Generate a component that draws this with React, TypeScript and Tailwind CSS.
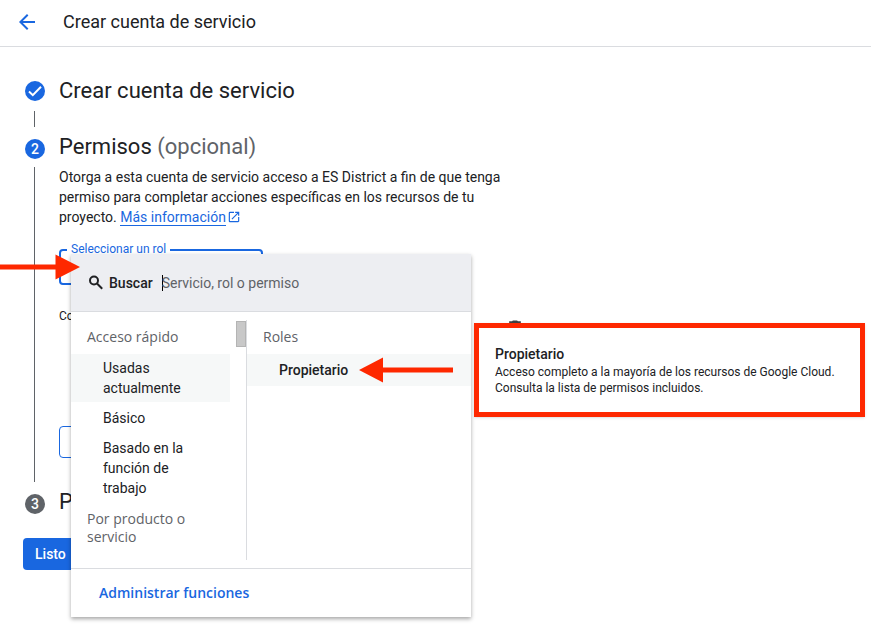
import { useState } from 'react'
import type { ReactNode } from 'react'
import { MdArrowBack, MdDelete, MdOpenInNew } from 'react-icons/md'

const quickAccess = ['Usadas actualmente', 'Básico', 'Basado en la función de trabajo']

type StepProps = {
  badge: ReactNode
  badgeClass?: string
  lineClass?: string
  className?: string
  children: ReactNode
}

function Step({ badge, badgeClass = 'bg-[#1967e0]', lineClass, className = '', children }: StepProps) {
  return (
    <li className={`flex gap-[14px] ${className}`}>
      <div className="flex w-5 shrink-0 flex-col items-center pt-2 pb-1">
        <span
          className={`flex size-5 shrink-0 items-center justify-center rounded-full text-sm font-medium text-white ${badgeClass}`}
        >
          {badge}
        </span>
        {lineClass && <span className={`mr-px w-px flex-1 bg-[#5f6368] ${lineClass}`} />}
      </div>
      <div className="min-w-0 flex-1">{children}</div>
    </li>
  )
}

function StepTitle({ children, className = 'pt-[2px]' }: { children: ReactNode; className?: string }) {
  return <h2 className={`text-[22px] leading-7 ${className}`}>{children}</h2>
}

function CheckIcon() {
  return (
    <svg width="20" height="20" viewBox="0 0 20 20" fill="none" stroke="currentColor" strokeWidth="2" aria-hidden="true">
      <path d="M4 10.600 7.800 14.200 16 5.800" />
    </svg>
  )
}

function SearchIcon() {
  return (
    <svg
      className="mr-1 size-[18px]"
      viewBox="0 0 18 18"
      fill="none"
      stroke="currentColor"
      strokeWidth="2"
      aria-hidden="true"
    >
      <circle cx="7" cy="6.500" r="4" />
      <path d="m10 9.500 5.200 5.200" />
    </svg>
  )
}

function RoleDetail() {
  return (
    <aside className="absolute top-[69px] left-[403px] w-[391px] border-[5px] border-[#fe2800] bg-white p-4 shadow-sm">
      <h3 className="text-sm leading-5 font-medium">Propietario</h3>
      <p className="text-xs leading-4">
        Acceso completo a la mayoría de los recursos de Google Cloud. Consulta la lista de permisos incluidos.
      </p>
    </aside>
  )
}

function RoleMenu() {
  const [active, setActive] = useState(quickAccess[0])
  const [query, setQuery] = useState('')

  return (
    <div className="absolute top-[5px] left-3 z-10 w-[400px] bg-white shadow-[0_2px_4px_rgba(0,0,0,0.35)]">
      <div className="flex h-[58px] items-center border-b border-[#dadce0] bg-[#edeef2] px-4">
        <SearchIcon />
        <label htmlFor="role-search" className="text-sm font-medium">
          Buscar
        </label>
        <span className="ml-[9px] h-4 w-px bg-black" />
        <input
          id="role-search"
          value={query}
          onChange={(e) => setQuery(e.target.value)}
          placeholder="Servicio, rol o permiso"
          className="-ml-px min-w-0 flex-1 bg-transparent text-sm outline-none placeholder:text-[#5f6368]"
        />
      </div>

      <div className="flex border-b border-[#dadce0] py-2">
        <div className="flex w-44 border-r border-[#dadce0]">
          <div className="w-[159px] text-sm">
            <p className="px-4 py-2 font-['Open_Sans',sans-serif] leading-[18px] text-[#5f6368]">Acceso rápido</p>
            <ul className="flex flex-col gap-[2px]">
              {quickAccess.map((item) => (
                <li key={item}>
                  <button
                    type="button"
                    onClick={() => setActive(item)}
                    className={`block w-full py-1 pr-8 pl-8 text-left leading-5 ${
                      item === active ? 'bg-[#f6f8f8]' : ''
                    }`}
                  >
                    {item}
                  </button>
                </li>
              ))}
            </ul>
            <p className="px-4 pt-2 pb-[14px] font-['Open_Sans',sans-serif] leading-[18px] text-[#5f6368]">
              Por producto o servicio
            </p>
          </div>
          <span className="mt-px ml-auto h-[26px] w-[10px] border border-[#b4b4b4] bg-[#c8c8c8]" />
        </div>
        <div className="flex-1 text-sm">
          <p className="px-4 py-2 font-['Open_Sans',sans-serif] leading-[18px] text-[#5f6368]">Roles</p>
          <button type="button" className="block h-8 w-full bg-[#f6f8f8] pl-8 text-left font-medium">
            Propietario
          </button>
        </div>
      </div>

      <div className="flex h-12 items-center px-7">
        <a href="#roles" className="font-['Open_Sans',sans-serif] text-sm font-semibold text-[#1967e0]">
          Administrar funciones
        </a>
      </div>

      <svg
        className="absolute top-[103px] left-[288px]"
        width="95"
        height="26"
        viewBox="0 0 95 26"
        fill="#fe2800"
        aria-hidden="true"
      >
        <path d="M0 13 24 .5V10.500H94V15.500H24V25.500Z" />
      </svg>
      <RoleDetail />
    </div>
  )
}

function RoleField() {
  return (
    <div className="relative mt-[22px] w-[204px]">
      <label htmlFor="role" className="absolute -top-2 left-2 bg-white px-1 text-xs leading-4 text-[#1967e0]">
        Seleccionar un rol
      </label>
      <select id="role" className="block h-9 w-full appearance-none rounded border-2 border-[#1967e0] bg-white px-3" />
      <RoleMenu />
    </div>
  )
}

export default function App() {
  return (
    <div className="relative min-h-screen overflow-hidden bg-white font-['Roboto',sans-serif] text-[#202124]">
      <header className="flex items-center gap-6 border-b border-[#dadce0] px-[15px] pt-[10px] pb-3">
        <button type="button" aria-label="Volver" className="text-[#1967e0]">
          <MdArrowBack className="size-6" />
        </button>
        <h1 className="text-lg leading-6">Crear cuenta de servicio</h1>
      </header>

      <main className="pt-[26px] pr-6 pb-12 pl-[25px]">
        <ol>
          <Step badge={<CheckIcon />} lineClass="mt-[10px]" className="h-[58px]">
            <StepTitle className="pt-1">Crear cuenta de servicio</StepTitle>
          </Step>

          <Step badge="2" lineClass="mt-2">
            <StepTitle>
              Permisos <span className="text-[#5f6368]">(opcional)</span>
            </StepTitle>
            <p className="mt-[6px] max-w-[450px] text-sm leading-5">
              Otorga a esta cuenta de servicio acceso a ES District a fin de que tenga permiso para completar acciones
              específicas en los recursos de tu proyecto.{' '}
              <a href="#info" className="whitespace-nowrap text-[#1967e0]">
                <span className="border-b border-[#1967e0]">Más información</span>
                <MdOpenInNew className="ml-px inline size-[14px] align-[-2px]" aria-hidden="true" />
              </a>
            </p>
            <RoleField />
            <div className="mt-[22px] flex max-w-[466px] items-start justify-between">
              <p className="text-xs leading-[18px]">Condición</p>
              <button type="button" aria-label="Borrar rol" className="mt-[11px] text-[#3c4043]">
                <MdDelete className="size-5" />
              </button>
            </div>
            <button
              type="button"
              aria-label="Agregar otro rol"
              className="mt-[88px] mb-[28px] block h-8 w-40 rounded border border-[#1967e0]"
            />
          </Step>

          <Step badge="3" badgeClass="bg-[#5f6368]">
            <StepTitle>Principales</StepTitle>
          </Step>
        </ol>
        <button
          type="button"
          className="mt-5 -ml-[2px] h-8 rounded bg-[#1967e0] px-3 text-sm font-medium text-white"
        >
          Listo
        </button>
      </main>

      <svg
        className="absolute top-[254px] left-0 z-20"
        width="80"
        height="26"
        viewBox="0 0 80 26"
        fill="#fe2800"
        aria-hidden="true"
      >
        <path d="M80 13 55.500 .5V10.500H0V15.500H55.500V25.500Z" />
      </svg>
    </div>
  )
}
